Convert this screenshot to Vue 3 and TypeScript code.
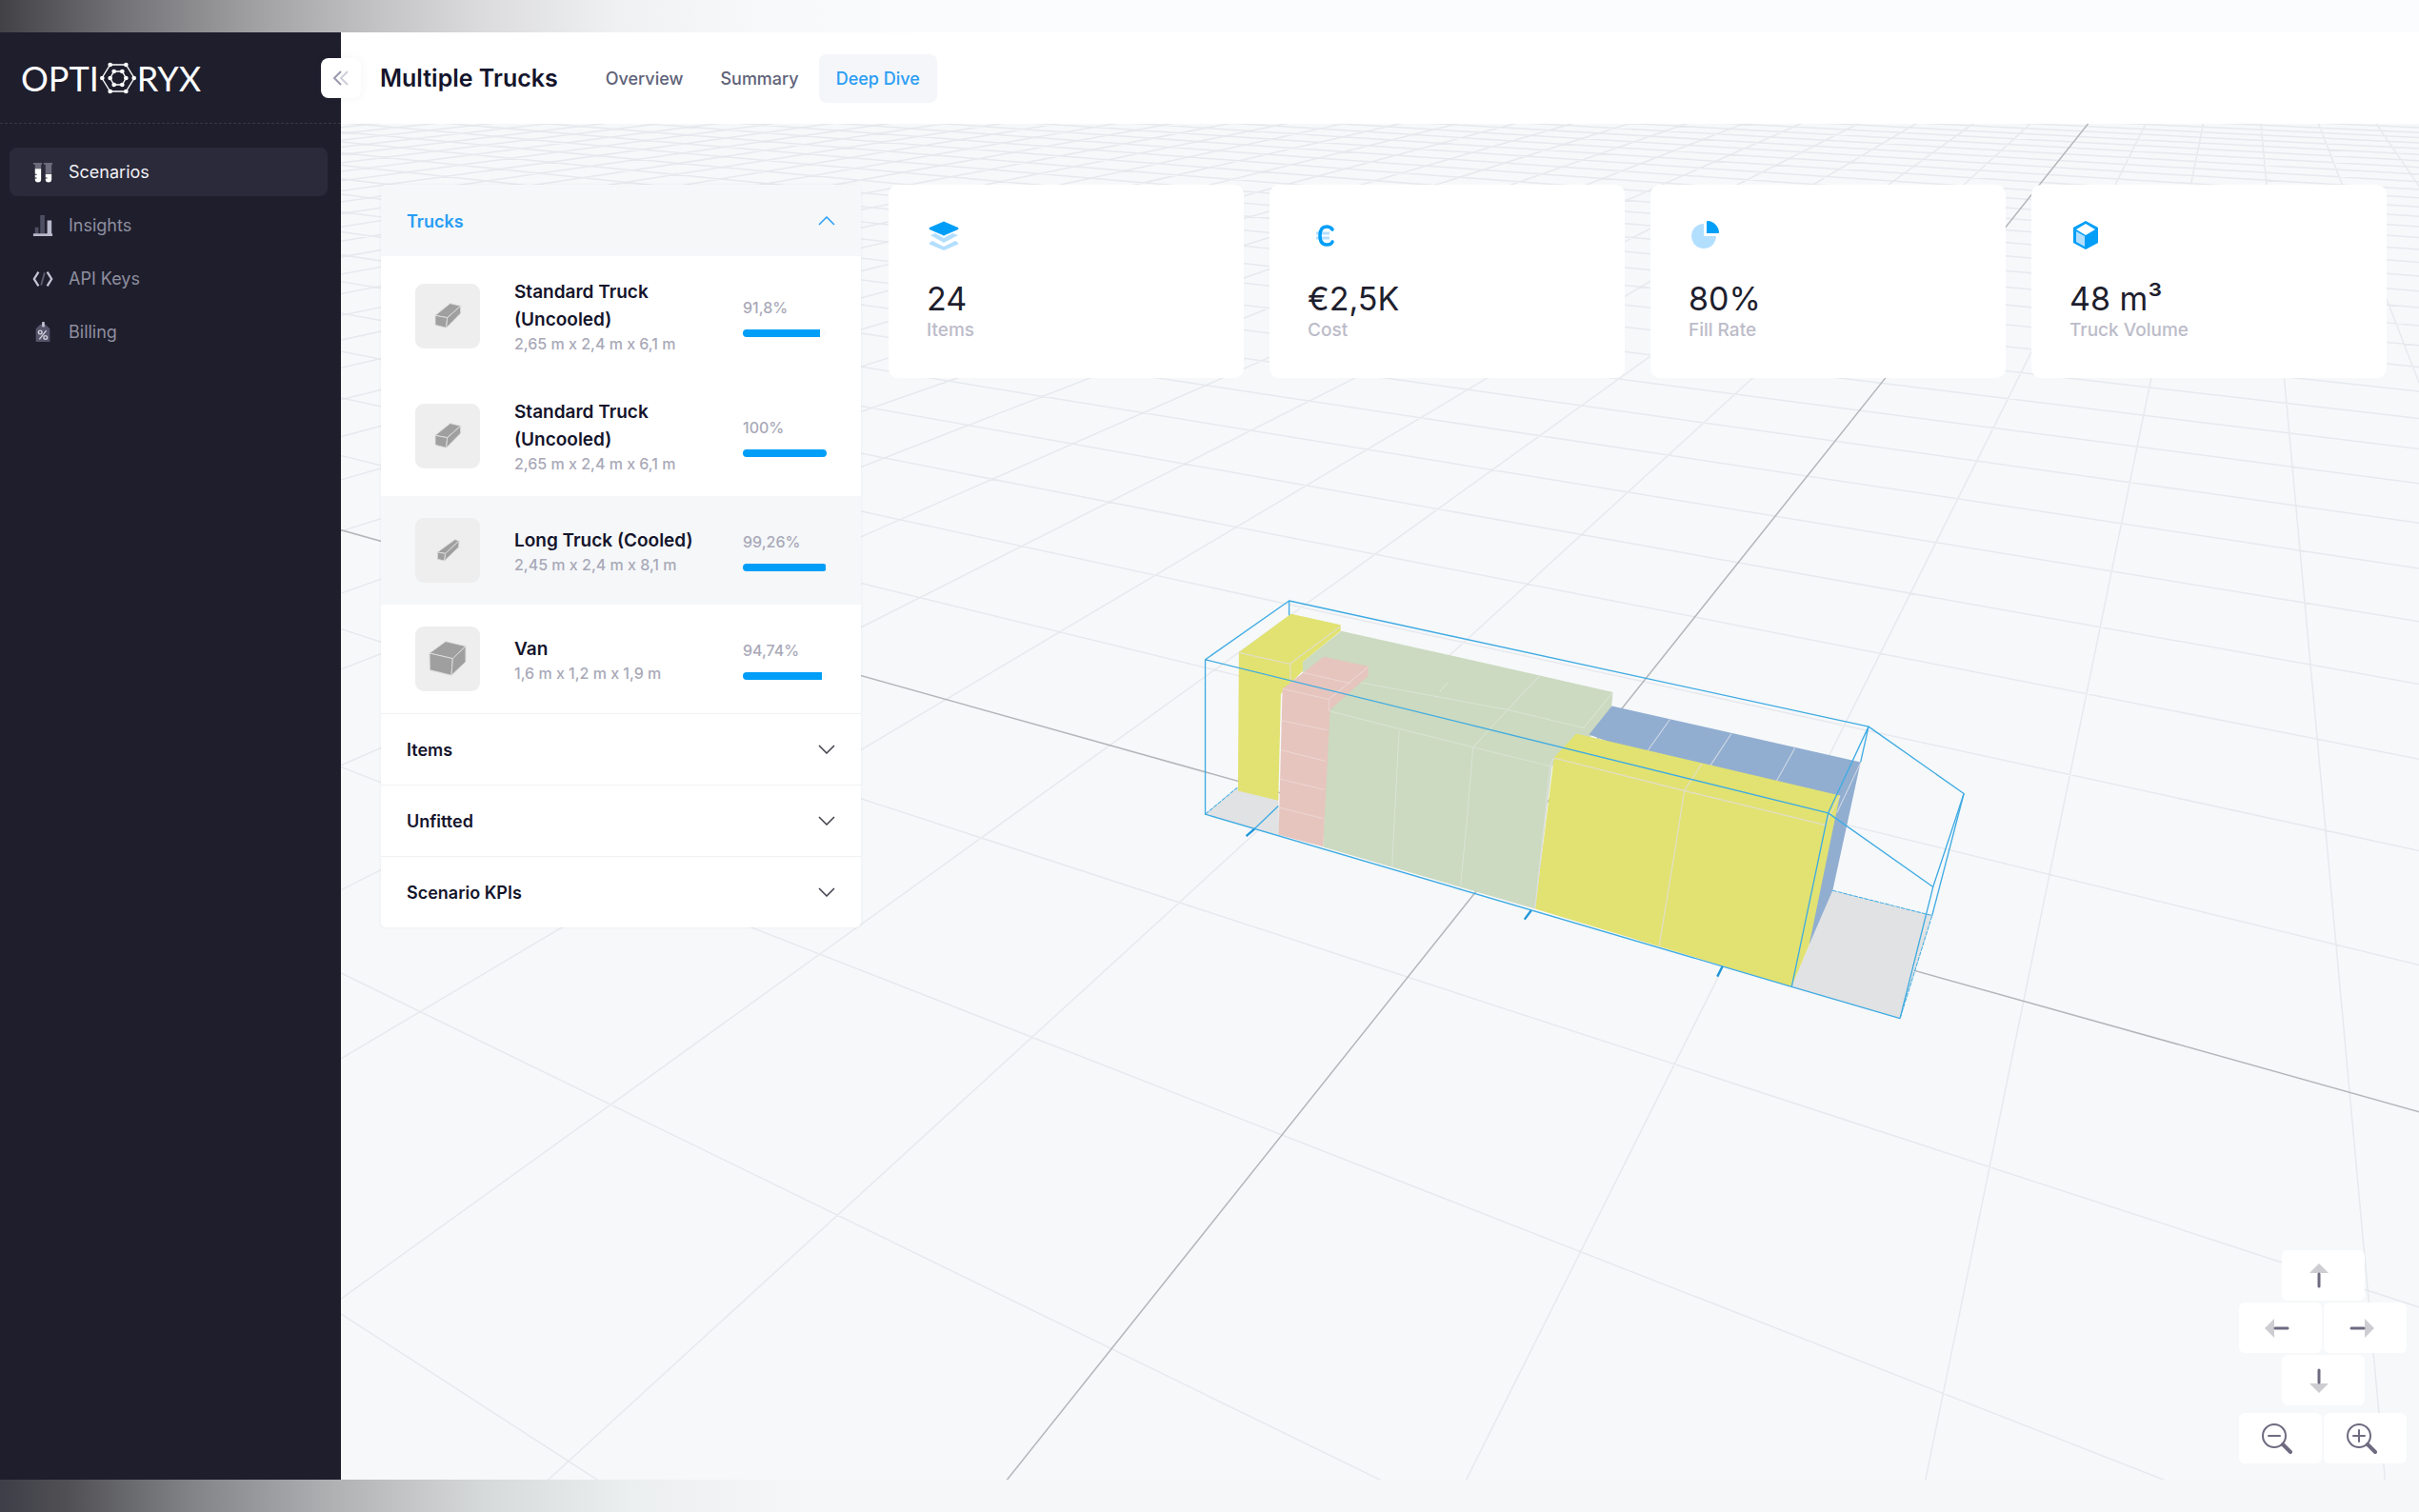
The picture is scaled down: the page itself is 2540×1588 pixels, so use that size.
<script setup lang="ts">
import { ref } from 'vue'

interface Truck {
  name: string
  size: string
  fill: number
  label: string
  top: string
  front: string
  side: string
}

const navItems = [
  { id: 'scenarios', label: 'Scenarios' },
  { id: 'insights', label: 'Insights' },
  { id: 'keys', label: 'API Keys' },
  { id: 'billing', label: 'Billing' },
]

const tabs = ['Overview', 'Summary', 'Deep Dive']
const activeTab = ref('Deep Dive')
const activeNav = ref('scenarios')

const standard = {
  top: '63,100 110,62 143,70 101,107',
  front: '63,100 101,107 98,139 63,130',
  side: '101,107 143,70 143,93 98,139',
}

const trucks: Truck[] = [
  { name: 'Standard Truck (Uncooled)', size: '2,65 m x 2,4 m x 6,1 m', fill: 91.8, label: '91,8%', ...standard },
  { name: 'Standard Truck (Uncooled)', size: '2,65 m x 2,4 m x 6,1 m', fill: 100, label: '100%', ...standard },
  {
    name: 'Long Truck (Cooled)', size: '2,45 m x 2,4 m x 8,1 m', fill: 99.26, label: '99,26%',
    top: '70,108 125,68 138,72 95,112', front: '70,108 95,112 92,135 70,130', side: '95,112 138,72 137,92 92,135',
  },
  {
    name: 'Van', size: '1,6 m x 1,2 m x 1,9 m', fill: 94.74, label: '94,74%',
    top: '45,84 96,47 159,62 118,101', front: '45,84 118,101 114,154 46,137', side: '118,101 159,62 159,111 114,154',
  },
]
const selectedTruck = ref(2)

const sections = ['Items', 'Unfitted', 'Scenario KPIs']

const stats = [
  { id: 'items', value: '24', label: 'Items' },
  { id: 'cost', value: '€2,5K', label: 'Cost' },
  { id: 'fill', value: '80%', label: 'Fill Rate' },
  { id: 'volume', value: '48 m³', label: 'Truck Volume' },
]

// Ground plane: perspective projection of the floor grid onto the scene.
const G = -0.06802
const H = -0.11577
const depth = (u: number, v: number) => G * u + H * v + 1
function project(u: number, v: number): string {
  const w = depth(u, v)
  const x = (127.8 * u - 272.6 * v + 1579.7) / w
  const y = (4.78 * u + 8.57 * v + 898.3) / w
  return `${x.toFixed(1)} ${y.toFixed(1)}`
}

const REACH = 60
const NEAR = 0.15
function lineAlongV(u: number): string {
  const vMax = Math.min(REACH, (NEAR - 1 - G * u) / H)
  return vMax > -REACH ? `M${project(u, -REACH)}L${project(u, vMax)}` : ''
}
function lineAlongU(v: number): string {
  const uMax = Math.min(REACH, (NEAR - 1 - H * v) / G)
  return uMax > -REACH ? `M${project(-REACH, v)}L${project(uMax, v)}` : ''
}
let gridPath = ''
for (let i = -REACH; i <= REACH; i++) {
  if (i !== 0) gridPath += lineAlongV(i) + lineAlongU(i)
}
const axisPath = lineAlongV(0) + lineAlongU(0)
</script>

<template>
  <div class="page">
    <div class="strip strip-top"></div>
    <div class="app">
      <aside class="sidebar">
        <div class="brand">
          <span>OPTI</span>
          <svg class="brand-mark" viewBox="0 0 114 102" aria-hidden="true">
            <g fill="none" stroke="#fff" stroke-width="4">
              <path d="M32 9H82L108 51L82 93H32L6 51Z" />
              <path d="M44 30H70L82 51L70 72H44L32 51Z" />
            </g>
            <g fill="#fff">
              <circle cx="32" cy="9" r="7" /><circle cx="82" cy="9" r="7" /><circle cx="107" cy="51" r="7" />
              <circle cx="82" cy="93" r="7" /><circle cx="32" cy="93" r="7" /><circle cx="7" cy="51" r="7" />
              <circle cx="44" cy="30" r="7" /><circle cx="70" cy="30" r="7" /><circle cx="82" cy="51" r="7" />
              <circle cx="70" cy="72" r="7" /><circle cx="44" cy="72" r="7" /><circle cx="32" cy="51" r="7" />
            </g>
          </svg>
          <span>RYX</span>
        </div>
        <nav class="nav">
          <a
            v-for="item in navItems"
            :key="item.id"
            href="#"
            class="nav-item"
            :class="{ active: item.id === activeNav }"
            @click.prevent="activeNav = item.id"
          >
            <svg viewBox="0 0 24 24" class="nav-icon" aria-hidden="true">
              <g v-if="item.id === 'scenarios'">
                <path d="M1 1h10v2h-1v5H3V3H1zM13 1h10v2h-1v10h-7V3h-2z" fill="#6c6c7c" />
                <path d="M3 8h7v12a3.500 3.500 0 0 1-7 0v-1h2v-1H3v-3h2v-1H3zM15 14h7v6a3.500 3.500 0 0 1-7 0v-1h2v-1h-2z" fill="#fff" />
              </g>
              <g v-else-if="item.id === 'insights'">
                <path d="M3 14h4v7H3zM9 0h5v21H9z" fill="#4f4f63" />
                <path d="M17 6h5v15h1v3H1v-3h16z" fill="#b9b9cc" />
              </g>
              <g v-else-if="item.id === 'keys'" fill="none" stroke-width="2.500">
                <path d="M7 4L2 12L7 20M17 4L22 12L17 20" stroke="#c4c4d4" />
                <path d="M14 5L10 19" stroke="#5d5d70" stroke-width="2" />
              </g>
              <g v-else>
                <path d="M4 8l5-5h6l5 5v15H4z" fill="#54546a" />
                <rect x="11" y="0" width="3" height="6" rx="1" fill="#c4c4d4" />
                <g fill="none" stroke="#d0d0dc" stroke-width="1.500">
                  <circle cx="9" cy="12" r="2" /><circle cx="15" cy="18" r="2" /><path d="M16 10L8 20" />
                </g>
              </g>
            </svg>
            {{ item.label }}
          </a>
        </nav>
        <button class="collapse" type="button" aria-label="Collapse sidebar">
          <svg viewBox="0 0 18 18" width="18" height="18" fill="none" stroke-width="2" aria-hidden="true">
            <path d="M9 2L2 9L9 16" stroke="#9a9aae" /><path d="M16 2L9 9L16 16" stroke="#cfcfda" />
          </svg>
        </button>
      </aside>

      <main class="main">
        <header class="topbar">
          <h1>Multiple Trucks</h1>
          <nav class="tabs">
            <a
              v-for="tab in tabs"
              :key="tab"
              href="#"
              :class="{ active: tab === activeTab }"
              @click.prevent="activeTab = tab"
            >{{ tab }}</a>
          </nav>
        </header>

        <section class="stage">
          <svg class="scene" viewBox="358 130 2182 1423" preserveAspectRatio="xMidYMid slice" aria-hidden="true">
            <path :d="gridPath" fill="none" stroke="#e7e9ee" stroke-width="1.500" />
            <path :d="axisPath" fill="none" stroke="#b4b6ba" stroke-width="1.500" />
            <g transform="translate(1240 600) scale(0.33333)">
              <g fill="#e1e2e3">
                <path d="M77 764L178 682L307 720L310 830Z" />
                <path d="M1923 1307L2264 1407L2365 1083L2052 1004L1978 1175Z" />
              </g>
              <path d="M505 187L1130 327L1360 380L1356 425L1290 520L1168 614L1115 1062L448 867L466 420L384 330V284Z" fill="#cbdac0" />
              <g fill="none" stroke="#dbe3d6" stroke-width="3">
                <path d="M470 440L920 553L1168 614M1130 327L980 487L920 553M380 315L1030 435L1268 492M1360 380L1268 492" />
                <path d="M687 500L665 930M920 553L900 790L880 997M840 350L815 378" />
              </g>
              <g transform="translate(1140 240)">
                <path d="M217 183L1000 360L912 764L838 935L860 540L145 273Z" fill="#91aed1" />
                <path d="M400 225L325 330M593 270L525 374M793 316L733 424M1000 362L925 520" fill="none" stroke="#d5dbe5" stroke-width="3" />
                <path d="M105 270L935 465L918 545L838 935L783 1067L-25 822L35 345Z" fill="#e1e271" />
                <g fill="none" stroke="#e2dfc0" stroke-width="4">
                  <path d="M35 347L445 450L888 558L935 465M500 365L445 450L420 610L366 938" />
                  <path d="M35 347Q18 360 10 500L-25 820" stroke="#dcdedb" />
                </g>
              </g>
              <path d="M183 254L347 133L503 168V187L384 284V312L315 385L307 721L180 690Z" fill="#e1e271" />
              <path d="M186 256L343 291L503 172M345 291V345" fill="none" stroke="#e2dfc0" stroke-width="4" />
              <path d="M320 369L450 268L590 298V328L470 435L448 866L308 829Z" fill="#e6c5be" />
              <g fill="none" stroke="#ecd6d2" stroke-width="3">
                <path d="M320 369L466 402L590 300M466 402V440M318 469L461 499M316 562L457 597M313 653L453 687M311 743L450 778M385 318L535 352" />
              </g>
              <g fill="none" stroke="#3fabe3" stroke-width="4" stroke-linejoin="round">
                <path d="M341 138V92L77 277V764L1923 1307L2264 1407" />
                <path d="M341 92L2165 488L2465 699L2368 993L2264 1407" />
                <path d="M77 277L2038 760L2368 993" />
                <path d="M2140 600L2165 488L2038 760L1923 1307M2465 699L2365 1083" />
                <path d="M77 764L178 680M2052 1004L2365 1083L2264 1407" stroke-width="3" stroke-dasharray="14 3" />
                <path d="M307 738L232 810" />
                <path d="M232 810L206 833M1103 1067L1082 1095M1705 1243L1689 1275" stroke="#1e96d8" stroke-width="7" />
              </g>
            </g>
          </svg>

          <div class="overlay">
            <div class="panel">
              <button type="button" class="section open" aria-expanded="true">
                Trucks
                <svg viewBox="0 0 18 10" aria-hidden="true"><path d="M1 9L9 1L17 9" /></svg>
              </button>
              <div
                v-for="(truck, i) in trucks"
                :key="i"
                class="truck"
                :class="{ selected: i === selectedTruck }"
                @click="selectedTruck = i"
              >
                <svg class="thumb" viewBox="0 0 204 204" aria-hidden="true">
                  <g fill="#9f9f9f" stroke="#dcdcdc" stroke-width="3" stroke-linejoin="round">
                    <polygon :points="truck.top" /><polygon :points="truck.front" /><polygon :points="truck.side" />
                  </g>
                </svg>
                <div class="truck-text">
                  <div class="truck-name">{{ truck.name }}</div>
                  <div class="truck-size">{{ truck.size }}</div>
                </div>
                <div class="load">
                  <div class="load-label">{{ truck.label }}</div>
                  <div class="load-track" role="progressbar" :aria-valuenow="truck.fill" :aria-label="truck.name">
                    <div class="load-fill" :style="{ width: truck.fill + '%' }"></div>
                  </div>
                </div>
              </div>
              <button v-for="name in sections" :key="name" type="button" class="section" aria-expanded="false">
                {{ name }}
                <svg viewBox="0 0 18 10" aria-hidden="true"><path d="M1 1L9 9L17 1" /></svg>
              </button>
            </div>

            <div class="stats">
              <article v-for="stat in stats" :key="stat.id" class="stat">
                <svg viewBox="0 0 36 36" class="stat-icon" aria-hidden="true">
                  <g v-if="stat.id === 'items'">
                    <path d="M4 18L9 16L18 21L27 16L33 18L18 26Z" fill="#b3dfff" />
                    <path d="M3 26L6 24L18 30L30 24L33 26Q34 27 32 28L18 34L4 28Q2 27 3 26Z" fill="#b3dfff" />
                    <path d="M17 4Q18 3 19 4L33 10Q34 11 33 12L19 18Q18 19 17 18L3 12Q2 11 3 10Z" fill="#009ef7" />
                  </g>
                  <g v-else-if="stat.id === 'cost'" fill="none">
                    <path d="M9 16H23M9 21H23" stroke="#b3dfff" stroke-width="3" />
                    <path d="M26 12C24 9 22 9 20 9C15 9 13 13 13 18.500C13 24 15 28 20 28C22 28 25 28 26 25" stroke="#009ef7" stroke-width="3.500" stroke-linecap="round" />
                  </g>
                  <g v-else-if="stat.id === 'fill'">
                    <path d="M16 6V19H29A13 13 0 1 1 16 6Z" fill="#b3dfff" />
                    <path d="M19 4Q19 3 20 3A13 13 0 0 1 32 15Q32 16 31 16H19Z" fill="#009ef7" />
                  </g>
                  <g v-else>
                    <path d="M17 3L30 10V26L17 33L4 26V10Z" fill="#009ef7" />
                    <path d="M17 6L27 12L17 18L7 12Z" fill="#fff" />
                    <path d="M7 14L16 19V30L7 25Z" fill="#b3dfff" />
                  </g>
                </svg>
                <div class="stat-value">{{ stat.value }}</div>
                <div class="stat-label">{{ stat.label }}</div>
              </article>
            </div>
          </div>

          <div class="controls">
            <button type="button" aria-label="Pan up">
              <svg viewBox="0 0 28 28"><path d="M14 1L24 11H4Z" fill="#cdcdd2" /><path d="M14 12V25" /></svg>
            </button>
            <div class="control-row">
              <button type="button" aria-label="Pan left">
                <svg viewBox="0 0 28 28"><path d="M1 14L11 4V24Z" fill="#cdcdd2" /><path d="M12 14H25" /></svg>
              </button>
              <button type="button" aria-label="Pan right">
                <svg viewBox="0 0 28 28"><path d="M27 14L17 4V24Z" fill="#cdcdd2" /><path d="M3 14H16" /></svg>
              </button>
            </div>
            <button type="button" aria-label="Pan down">
              <svg viewBox="0 0 28 28"><path d="M14 27L24 17H4Z" fill="#cdcdd2" /><path d="M14 3V16" /></svg>
            </button>
            <div class="control-row zoom">
              <button type="button" aria-label="Zoom out">
                <svg viewBox="0 0 32 32"><g stroke-width="2"><circle cx="13" cy="13" r="12" /><path d="M7 13H19" /></g><path d="M22 22L30 30" stroke-width="4" /></svg>
              </button>
              <button type="button" aria-label="Zoom in">
                <svg viewBox="0 0 32 32"><g stroke-width="2"><circle cx="13" cy="13" r="12" /><path d="M7 13H19M13 7V19" /></g><path d="M22 22L30 30" stroke-width="4" /></svg>
              </button>
            </div>
          </div>
        </section>
      </main>
    </div>
    <div class="strip strip-bottom"></div>
  </div>
</template>

<style>
body {
  margin: 0;
}
</style>

<style scoped>
.page {
  display: flex;
  flex-direction: column;
  min-height: 100vh;
  font-family: Inter, 'Liberation Sans', sans-serif;
  font-size: 18px;
  color: #181c32;
}
.page * {
  box-sizing: border-box;
}
button {
  font: inherit;
  border: 0;
  cursor: pointer;
}
a {
  text-decoration: none;
}
.strip {
  height: 34px;
  flex: none;
}
.strip-top {
  background: linear-gradient(90deg, #424246 0, #757579 133px, #a0a0a2 266px, #c4c4c6 400px, #dcdcde 510px, #f0f1f2 650px, #f7f9fa 800px, #fbfcfd 1100px);
}
.strip-bottom {
  background: linear-gradient(90deg, #3e3e48 0, #505054 70px, #828387 200px, #b0b1b3 350px, #d7dadb 510px, #eceff0 660px, #f5f7f9 850px);
}
.app {
  flex: 1;
  display: flex;
}

.sidebar {
  position: relative;
  z-index: 2;
  flex: none;
  width: 358px;
  background: #1e1e2d;
}
.brand {
  display: flex;
  align-items: center;
  height: 96px;
  padding-left: 22px;
  border-bottom: 1px dashed #393945;
  font-family: Lato, sans-serif;
  font-size: 36px;
  color: #fff;
}
.brand-mark {
  width: 40px;
  height: 34px;
}
.nav {
  display: flex;
  flex-direction: column;
  gap: 5px;
  padding: 25px 14px 0 10px;
}
.nav-item {
  display: flex;
  align-items: center;
  gap: 16px;
  height: 51px;
  padding-left: 24px;
  border-radius: 8px;
  color: #8f8f9f;
}
.nav-item.active {
  background: #2a2a3a;
  color: #f0f0f5;
}
.nav-icon {
  width: 22px;
  height: 22px;
}
.collapse {
  position: absolute;
  top: 27px;
  right: -21px;
  display: flex;
  align-items: center;
  justify-content: center;
  width: 42px;
  height: 42px;
  padding: 0;
  border-radius: 8px;
  background: #fff;
  box-shadow: 0 0 10px rgba(80, 70, 90, 0.06);
}

.main {
  flex: 1;
  min-width: 0;
  display: flex;
  flex-direction: column;
}
.topbar {
  display: flex;
  align-items: center;
  gap: 32px;
  height: 96px;
  padding-left: 41px;
  background: #fff;
}
h1 {
  margin: 0;
  font-size: 25px;
  font-weight: 600;
  color: #14142b;
}
.tabs {
  display: flex;
  gap: 3px;
}
.tabs a {
  padding: 0 18px;
  line-height: 51px;
  border-radius: 8px;
  font-weight: 500;
  color: #5e6278;
}
.tabs a.active {
  background: #f4f6fa;
  color: #2a9df4;
}

.stage {
  position: relative;
  flex: 1;
  overflow: hidden;
  background: #f6f8fa;
}
.scene {
  position: absolute;
  inset: 0;
  width: 100%;
  height: 100%;
}
.overlay {
  position: relative;
  display: flex;
  align-items: flex-start;
  gap: 29px;
  padding: 64px 34px 0 42px;
}
.panel {
  flex: none;
  width: 504px;
  overflow: hidden;
  border-radius: 6px;
  background: #fff;
  box-shadow: 0 0 4px rgba(60, 70, 100, 0.06);
}
.section {
  display: flex;
  align-items: center;
  justify-content: space-between;
  width: 100%;
  height: 75px;
  padding: 0 27px;
  border-top: 1px solid #eff2f5;
  background: #fff;
  font-weight: 600;
  color: #14142b;
}
.section.open {
  border-top-color: #f5f7f9;
  background: #f5f7f9;
  color: #2a9df4;
}
.section svg {
  width: 18px;
  height: 10px;
  fill: none;
  stroke: #3f3f4a;
  stroke-width: 1.5px;
}
.section.open svg {
  stroke: #2a9df4;
}
.truck {
  display: flex;
  align-items: center;
  padding: 23px 36px;
}
.truck.selected {
  background: #f5f7f9;
}
.thumb {
  flex: none;
  width: 68px;
  height: 68px;
  border-radius: 9px;
  background: #eeeeee;
}
.truck-text {
  flex: 1;
  padding: 0 36px;
}
.truck-name {
  line-height: 29px;
  font-size: 19px;
  font-weight: 600;
  color: #14142b;
}
.truck-size {
  line-height: 22px;
  font-size: 16px;
  font-weight: 500;
  color: #a9a9b8;
}
.load {
  flex: none;
  width: 88px;
}
.load-label {
  margin-bottom: 11px;
  line-height: 24px;
  font-size: 16px;
  font-weight: 500;
  color: #a9a9b8;
}
.load-track {
  height: 8px;
  overflow: hidden;
  border-radius: 4px;
  background: #fafbfc;
}
.load-fill {
  height: 100%;
  background: #009ef7;
}

.stats {
  flex: 1;
  display: grid;
  grid-template-columns: repeat(4, 1fr);
  gap: 27px;
}
.stat {
  height: 203px;
  padding: 35px 40px;
  border-radius: 10px;
  background: #fff;
}
.stat-icon {
  display: block;
  width: 36px;
  height: 36px;
}
.stat-value {
  margin-top: 28px;
  line-height: 42px;
  font-size: 34px;
  color: #1e1e2d;
}
.stat-label {
  line-height: 24px;
  font-size: 19px;
  font-weight: 500;
  color: #bcbcc9;
}

.controls {
  position: absolute;
  right: 13px;
  bottom: 17px;
  display: flex;
  flex-direction: column;
  align-items: center;
  gap: 2px;
}
.control-row {
  display: flex;
  gap: 2px;
}
.control-row.zoom {
  margin-top: 6px;
}
.controls button {
  display: flex;
  align-items: center;
  justify-content: center;
  width: 87px;
  height: 53px;
  padding: 0 8px 0 0;
  border-radius: 6px;
  background: #fff;
}
.controls svg {
  width: 28px;
  height: 28px;
  fill: none;
  stroke-width: 3px;
  stroke-linecap: round;
}
.controls svg path,
.controls svg circle {
  stroke: #6f6a80;
}
.controls svg path[fill] {
  stroke: none;
}
.controls .zoom svg {
  width: 32px;
  height: 32px;
}
.controls .zoom svg g {
  stroke-width: 2px;
}
</style>
